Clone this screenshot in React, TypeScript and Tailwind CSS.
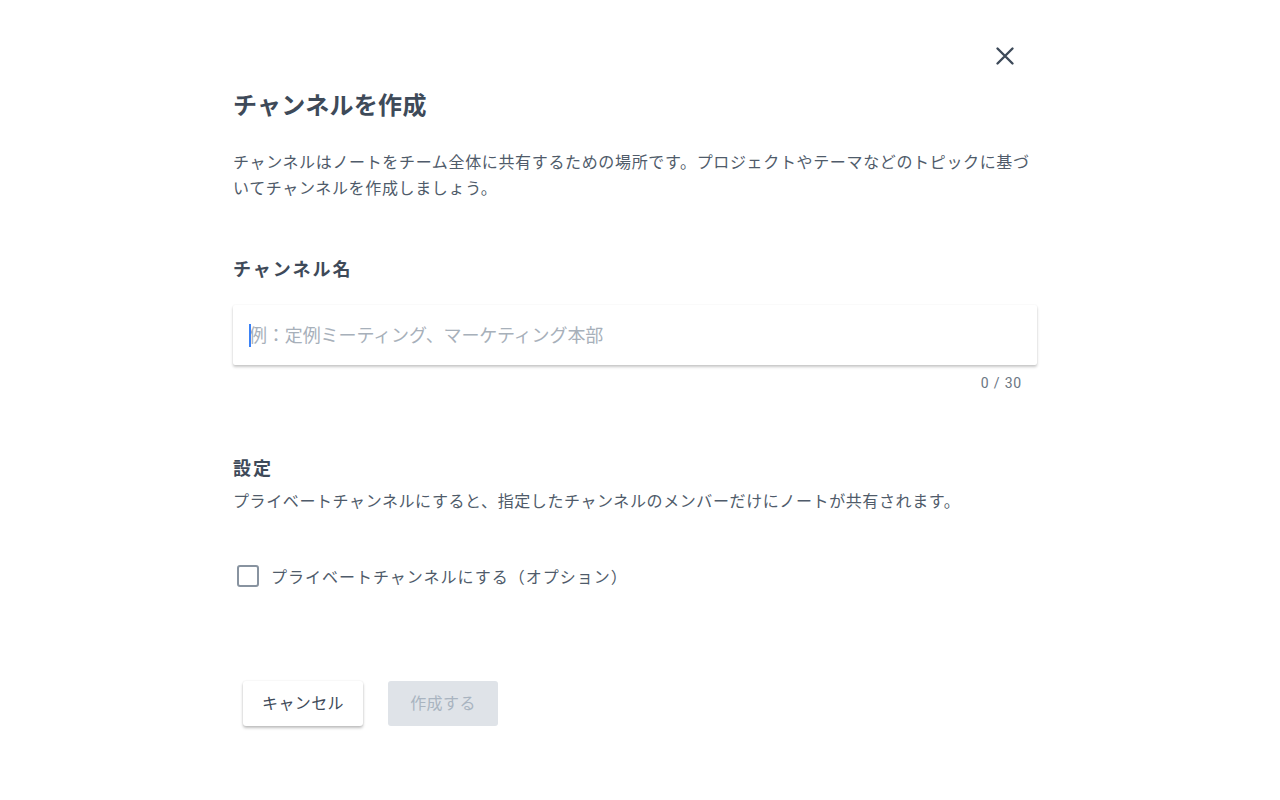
import React, { useState } from 'react'

function CloseIcon() {
  return (
    <svg width="24" height="24" viewBox="0 0 24 24" fill="none">
      <path d="M4.5 4.5L19.5 19.5M19.5 4.5L4.5 19.5" stroke="#3e4a59" strokeWidth="2.4" strokeLinecap="round" />
    </svg>
  )
}

export default function App() {
  const [name, setName] = useState('')
  const [isPrivate, setIsPrivate] = useState(false)

  return (
    <div className="min-h-screen bg-white font-['Noto_Sans_CJK_JP','Noto_Sans',sans-serif] text-[#3e4a59]">
      <div className="w-[804px] ml-[233px] pt-[44px]">

        {/* close */}
        <div className="flex justify-end pr-[20px] h-[24px]">
          <button className="w-[24px] h-[24px] flex items-center justify-center">
            <CloseIcon />
          </button>
        </div>

        {/* title */}
        <h1 className="mt-[20px] text-[24px] leading-[32px] font-bold tracking-[0.3px]">チャンネルを作成</h1>
        <p className="mt-[28px] text-[16px] leading-[26px] tracking-[0.65px] text-[#4f5b6a]">
          チャンネルはノートをチーム全体に共有するための場所です。プロジェクトやテーマなどのトピックに基づいてチャンネルを作成しましょう。
        </p>

        {/* name */}
        <h2 className="mt-[54px] text-[18px] leading-[28px] font-bold tracking-[2px]">チャンネル名</h2>
        <div className="mt-[23px] relative h-[60px] bg-white rounded-[2px] shadow-[0_2px_3px_rgba(0,0,0,0.22),0_0_2px_rgba(0,0,0,0.06)]">
          <span className="absolute left-[16px] top-[19px] w-[2px] h-[23px] bg-[#3b82f6]" />
          <input
            value={name}
            onChange={(e) => setName(e.target.value.slice(0, 30))}
            placeholder="例：定例ミーティング、マーケティング本部"
            className="w-full h-full pl-[16px] pr-4 pb-[2px] text-[18px] tracking-[-0.1px] bg-transparent outline-none caret-transparent placeholder:text-[#a7b0ba] text-[#3e4a59]"
          />
        </div>
        <div className="mt-[9px] pr-[15px] text-right text-[14px] leading-[18px] tracking-[0.8px] text-[#6b7683] font-['Roboto',sans-serif]">
          {name.length} / 30
        </div>

        {/* settings */}
        <h2 className="mt-[61px] text-[18px] leading-[28px] font-bold tracking-[2px]">設定</h2>
        <p className="mt-[6px] text-[16px] leading-[26px] tracking-[0.6px] text-[#4f5b6a]">
          プライベートチャンネルにすると、指定したチャンネルのメンバーだけにノートが共有されます。
        </p>

        <label className="mt-[51px] flex items-center h-[24px] pl-[4px] cursor-pointer">
          <input
            type="checkbox"
            checked={isPrivate}
            onChange={(e) => setIsPrivate(e.target.checked)}
            className="appearance-none w-[22px] h-[22px] rounded-[3px] border-2 border-[#8893a0] checked:bg-[#3e4a59] checked:border-[#3e4a59]"
          />
          <span className="ml-[12px] pb-[1px] text-[16px] leading-[24px] tracking-[1px] text-[#4f5b6a]">
            プライベートチャンネルにする（オプション）
          </span>
        </label>

        {/* actions */}
        <div className="mt-[93px] flex pl-[10px] gap-[25px]">
          <button className="w-[120px] h-[45px] pb-[3px] bg-white rounded-[3px] text-[16px] tracking-[0.4px] text-[#3e4a59] shadow-[0_2px_3px_rgba(0,0,0,0.25),0_0_2px_rgba(0,0,0,0.08)]">
            キャンセル
          </button>
          <button
            disabled={name.length === 0}
            className="w-[110px] h-[45px] pb-[3px] bg-[#dfe3e8] rounded-[3px] text-[16px] tracking-[0.4px] text-[#a9b4c0]"
          >
            作成する
          </button>
        </div>
      </div>
    </div>
  )
}
